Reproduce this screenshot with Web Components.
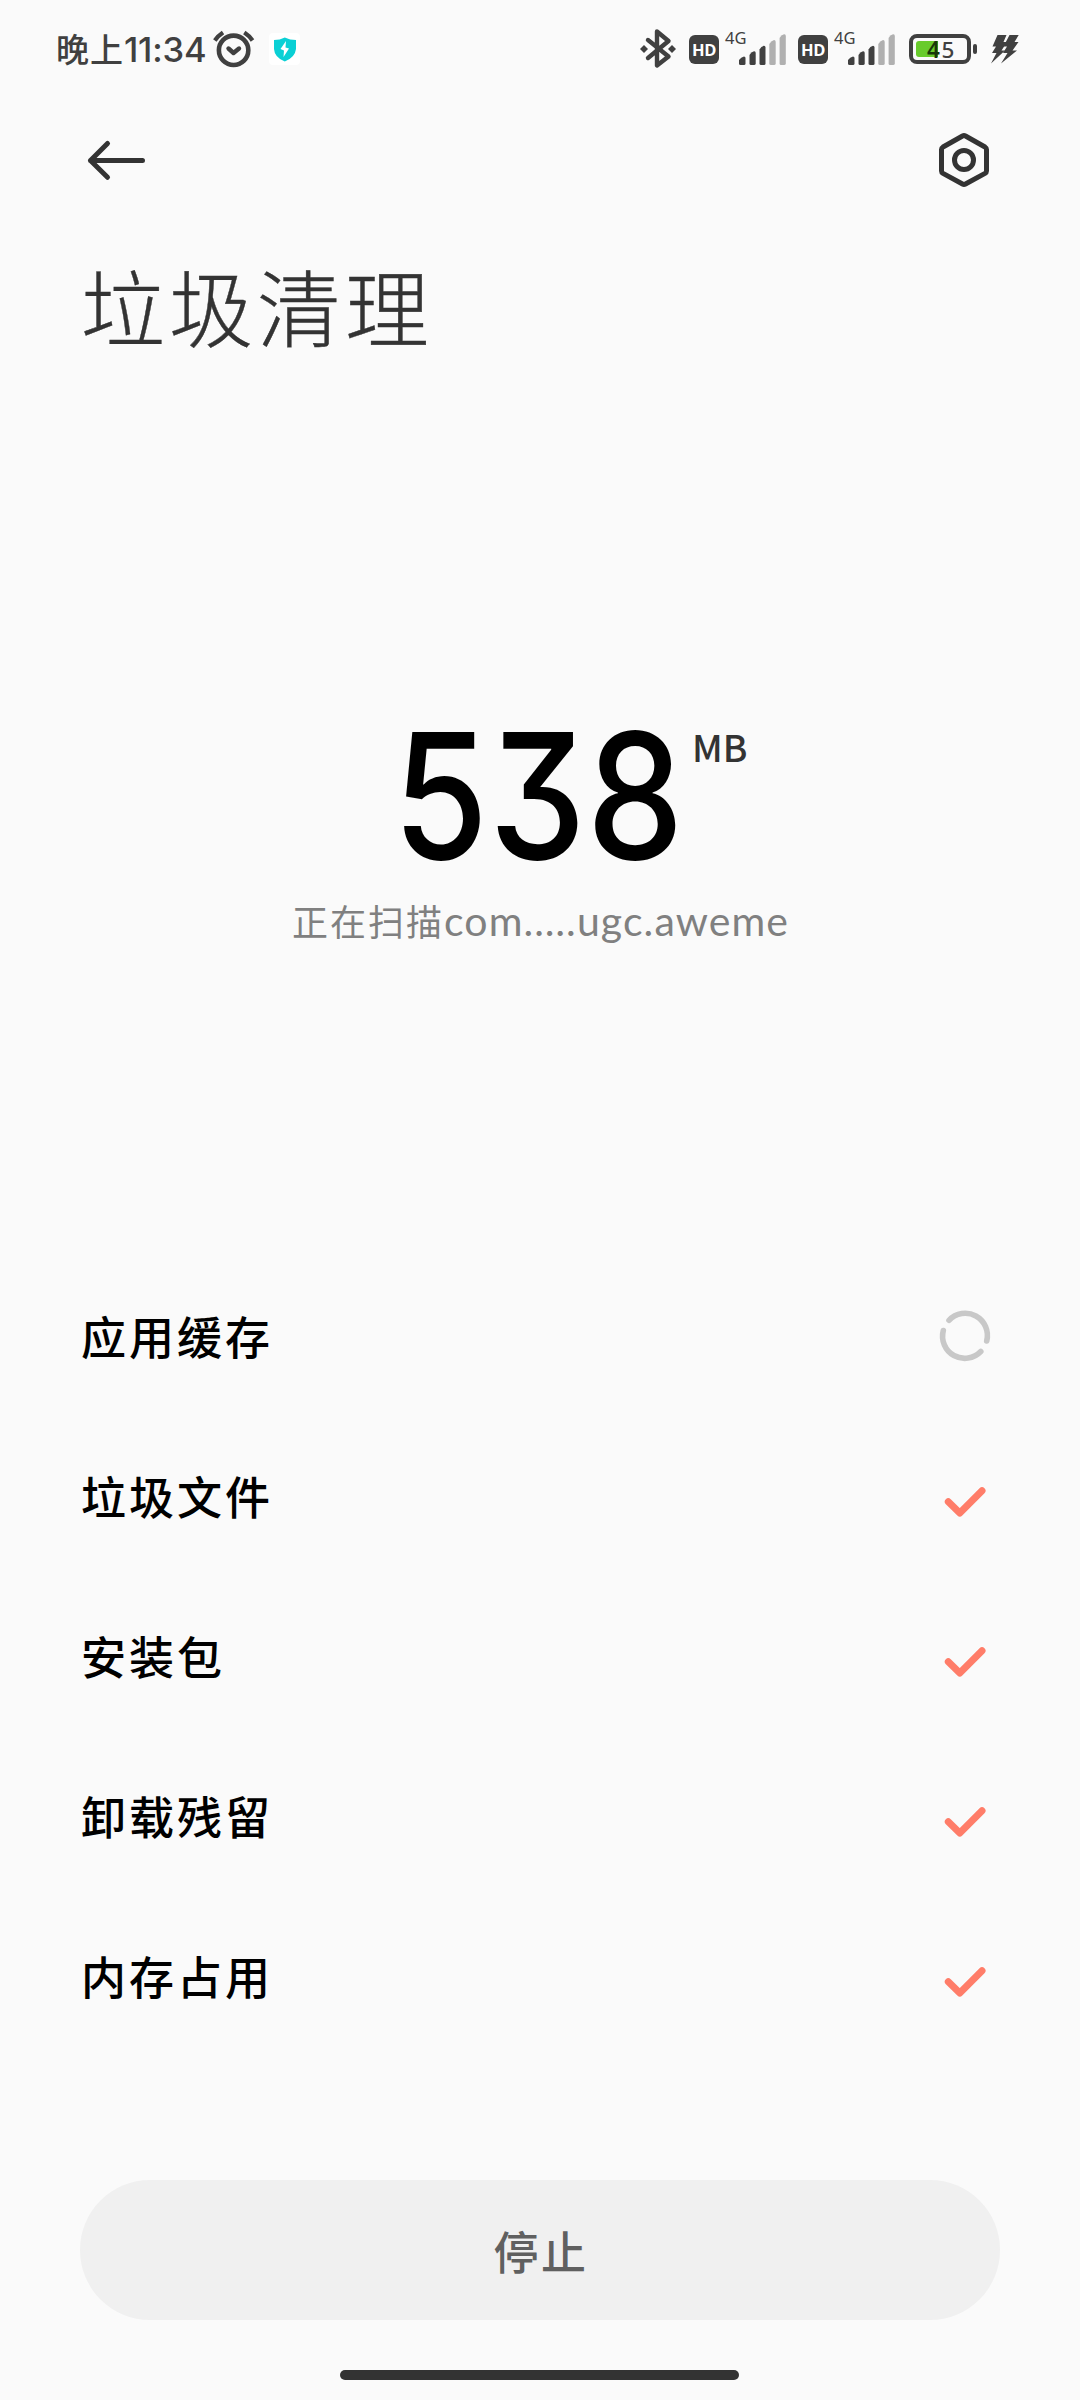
<!DOCTYPE html>
<html lang="zh-CN">
<head>
<meta charset="utf-8">
<title>垃圾清理</title>
<style>
    html, body {
        margin: 0;
        background: #fafafa;
    }
    body {
        width: 1080px;
        height: 2400px;
        overflow: hidden;
        font-family: "Noto Sans CJK SC", sans-serif;
        color: #333;
    }
</style>
</head>
<body>
<cleaner-page>
    <status-bar slot="status" battery="45">晚上<span>11:34</span></status-bar>
    <title-bar slot="title">垃圾清理</title-bar>
    <scan-total slot="total" value="538" unit="MB">正在扫描<span>com.….ugc.aweme</span></scan-total>
    <scan-item state="loading">应用缓存</scan-item>
    <scan-item state="done">垃圾文件</scan-item>
    <scan-item state="done">安装包</scan-item>
    <scan-item state="done">卸载残留</scan-item>
    <scan-item state="done">内存占用</scan-item>
    <stop-button slot="action">停止</stop-button>
</cleaner-page>

<script>
class CleanerPage extends HTMLElement{
    constructor(){
        super();
        const shadow = this.attachShadow({mode: 'open'});
        shadow.innerHTML=`
              <style>
                :host {
                    display: flex;
                    flex-direction: column;
                    width: 1080px;
                    height: 2400px;
                }
                .list {
                    display: flex;
                    flex-direction: column;
                    height: 923px;
                    flex: none;
                }
                .gesto {
                    width: 399px;
                    height: 10px;
                    margin: 50px 0 0 340px;
                    border-radius: 5px;
                    background: #333;
                }
              </style>
              <slot name="status"></slot>
              <slot name="title"></slot>
              <slot name="total"></slot>
              <div class="list"><slot></slot></div>
              <slot name="action"></slot>
              <div class="gesto"></div>`;
    }
}

class SignalIcon extends HTMLElement{
    constructor(){
        super();
        const shadow = this.attachShadow({mode: 'open'});
        shadow.innerHTML=`
              <style>
                :host {
                    display: flex;
                    width: 98px;
                    height: 98px;
                    align-items: center;
                }
                .hd {
                    width: 30px;
                    height: 29px;
                    border-radius: 6px;
                    background: #404040;
                    color: #fff;
                    font: bold 16.500px/29px "Open Sans", sans-serif;
                    letter-spacing: -0.500px;
                    text-align: center;
                }
                .red {
                    align-self: flex-start;
                    width: 22px;
                    margin: 26px 0 0 6px;
                    font: 400 16.500px/24px "Noto Sans", sans-serif;
                }
                svg {
                    margin-left: -9px;
                }
              </style>
              <div class="hd">HD</div>
              <div class="red">4G</div>
              <svg width="49" height="98" viewBox="0 0 49 98" fill="#404040">
                <path d="M1 63.500V60Q3 57 6 56.500Q7.500 56.500 7.500 58V63.500Q7.500 65 6 65H2.500Q1 65 1 63.500Z"/>
                <path d="M11.500 63.500V55Q13 52 16 51.200Q17.700 51 17.700 53V63.500Q17.700 65 16 65H13Q11.500 65 11.500 63.500Z"/>
                <path d="M21.500 63.500V49.500Q23 46.500 26 45.800Q27.500 45.800 27.500 47.500V63.500Q27.500 65 26 65H23Q21.500 65 21.500 63.500Z"/>
                <path fill="#b0b0b0" d="M31.300 63.500V44Q33 41 36 40Q37.700 40 37.700 42V63.500Q37.700 65 36 65H33Q31.300 65 31.300 63.500Z"/>
                <path fill="#b0b0b0" d="M41.600 63.500V38Q43 35 46 34.300Q47.800 34 47.800 36V63.500Q47.800 65 46 65H43Q41.600 65 41.600 63.500Z"/>
              </svg>`;
    }
}

class BatteryIcon extends HTMLElement{
    connectedCallback(){
        const shadow = this.attachShadow({mode: 'open'});
        const level = this.getAttribute('level');
        shadow.innerHTML=`
              <style>
                :host {
                    display: flex;
                    align-items: center;
                }
                .caja {
                    box-sizing: border-box;
                    display: grid;
                    width: 62px;
                    height: 30px;
                    padding: 3px;
                    border: 4px solid #404040;
                    border-radius: 8px;
                }
                .caja > * {
                    grid-area: 1 / 1;
                }
                .carga {
                    width: ${level}%;
                    height: 16px;
                    border-radius: 3px 0 0 3px;
                    background: #68cb2c;
                }
                .num {
                    margin-left: 11px;
                    font: 500 22.500px/17px "Noto Sans", sans-serif;
                    letter-spacing: 1.500px;
                    color: #404040;
                }
                b {
                    font-weight: 600;
                    color: #17370a;
                }
                .polo {
                    width: 4px;
                    height: 10px;
                    margin-left: 2px;
                    border-radius: 2px;
                    background: #404040;
                }
              </style>
              <div class="caja">
                <div class="carga"></div>
                <div class="num"><b>${level[0]}</b>${level.slice(1)}</div>
              </div>
              <div class="polo"></div>`;
    }
}

class StatusBar extends HTMLElement{
    connectedCallback(){
        const shadow = this.attachShadow({mode: 'open'});
        shadow.innerHTML=`
              <style>
                :host {
                    display: flex;
                    flex: none;
                    height: 98px;
                    align-items: center;
                    color: #404040;
                }
                .hora {
                    width: 157px;
                    margin-left: 56px;
                    font-size: 33px;
                    line-height: 98px;
                    font-weight: 500;
                    letter-spacing: 1px;
                    white-space: nowrap;
                }
                ::slotted(span) {
                    font-family: Inter, sans-serif;
                    font-size: 34.500px;
                    letter-spacing: -0.200px;
                }
                svg {
                    flex: none;
                }
                .bt {
                    margin-left: auto;
                }
                signal-icon {
                    margin-left: 11px;
                }
                battery-icon {
                    margin-left: 13px;
                }
              </style>
              <div class="hora"><slot></slot></div>
              <svg width="88" height="98" viewBox="213 0 88 98">
                <g fill="none" stroke="#404040" stroke-linecap="round" stroke-linejoin="round">
                  <circle cx="233.600" cy="50.300" r="14.700" stroke-width="4.600"/>
                  <path stroke-width="4.400" d="M228.500 48.500L233.500 53L239 48.500"/>
                  <path stroke-width="4.200" stroke-linecap="butt" d="M214.800 40.500Q218 36 223 32.600M244.300 32.600Q249.500 36 252.500 40.500"/>
                </g>
                <rect x="269" y="33" width="31" height="32" rx="4" fill="#fff"/>
                <path fill="#0bd0d5" d="M274 40Q280 40 284.800 37.500Q290 40 296 40V49Q295 57.500 284.800 61.500Q274.500 57.500 274 49Z"/>
                <path fill="#fff" d="M286 41L280.500 49L284 50.500L283.500 57L289 48.500L285.500 47.500Z"/>
              </svg>
              <svg class="bt" width="38" height="98" viewBox="640 0 38 98">
                <path fill="none" stroke="#404040" stroke-width="4.400" stroke-linecap="round" stroke-linejoin="round" d="M648 40L668.500 56.500L657 65.500V31.500L668.500 41L648 58"/>
                <path fill="#404040" d="M640 49L644 45L648 49L644 53ZM668 49L672 45L676 49L672 53Z"/>
              </svg>
              <signal-icon></signal-icon>
              <signal-icon></signal-icon>
              <battery-icon level="${this.getAttribute('battery')}"></battery-icon>
              <svg width="103" height="98" viewBox="977 0 103 98" fill="#404040">
                <path d="M997.500 35H1006.500L1003.500 42H1007L1001.500 50.500H1005L991 63.500L996.500 53H992L996 46.500H992.500Z"/>
                <path d="M1009.500 35H1018.700L1014.500 42H1018.500L1012.500 50.500H1017L1001 63.500L1007.500 53H1003L1007 46.500H1003.500Z"/>
              </svg>`;
    }
}

class TitleBar extends HTMLElement{
    constructor(){
        super();
        const shadow = this.attachShadow({mode: 'open'});
        shadow.innerHTML=`
              <style>
                :host {
                    display: block;
                    flex: none;
                    height: 282px;
                }
                .acciones {
                    display: flex;
                    justify-content: space-between;
                    padding: 32px 80px 0 80px;
                }
                svg {
                    fill: none;
                    stroke: #333;
                    stroke-width: 5;
                    stroke-linecap: round;
                    stroke-linejoin: round;
                }
                h1 {
                    margin: 55px 0 0 81px;
                    font-size: 84px;
                    line-height: 120px;
                    font-weight: 300;
                    letter-spacing: 4px;
                    -webkit-text-stroke: 0.400px #333;
                }
              </style>
              <div class="acciones">
                <svg width="70" height="60" viewBox="80 130 70 60"><path d="M107.500 143.500L90.500 160.500L107.500 177.300M90.500 160.500H142.500"/></svg>
                <svg width="70" height="60" viewBox="930 130 70 60"><path d="M962.500 136Q964 135.200 965.500 136L985 147Q986.500 148 986.500 149.500V171Q986.500 172.500 985 173.400L965.500 184Q964 184.800 962.500 184L943 173.400Q941.500 172.500 941.500 171V149.500Q941.500 148 943 147Z"/><circle cx="964" cy="160" r="9.500"/></svg>
              </div>
              <h1><slot></slot></h1>`;
    }
}

class ScanTotal extends HTMLElement{
    connectedCallback(){
        const shadow = this.attachShadow({mode: 'open'});
        shadow.innerHTML=`
              <style>
                :host {
                    display: block;
                    flex: none;
                    height: 877px;
                }
                .total {
                    display: flex;
                    padding: 317px 0 0 393px;
                }
                .valor {
                    width: 299px;
                    height: 196px;
                    color: #000;
                    font: 500 175px/197px Inter, sans-serif;
                    font-feature-settings: "cv09";
                    letter-spacing: 1px;
                    transform: scaleX(.88);
                    transform-origin: 0 0;
                }
                .unidad {
                    margin-top: 22px;
                    font-size: 37px;
                    line-height: 54px;
                    font-weight: 500;
                }
                .ruta {
                    margin: 0 0 0 292px;
                    font-size: 36px;
                    line-height: 54px;
                    letter-spacing: 2px;
                    color: #808080;
                    white-space: nowrap;
                }
                ::slotted(span) {
                    font-family: Lato, sans-serif;
                    font-size: 41px;
                    letter-spacing: 1.100px;
                }
              </style>
              <div class="total">
                <div class="valor">${this.getAttribute('value')}</div>
                <div class="unidad">${this.getAttribute('unit')}</div>
              </div>
              <div class="ruta"><slot></slot></div>`;
    }
}

class ScanItem extends HTMLElement{
    connectedCallback(){
        const shadow = this.attachShadow({mode: 'open'});
        // icons are centred on 0,0
        const iconos = {
            loading: '<path stroke="#c8c8c8" stroke-width="5.600" d="M-16 -16.700A22.200 22.200 0 0 1 21.700 4M15.800 14.500A22.200 22.200 0 0 1 -21.700 -6.500"/>',
            done: '<path stroke="#ff7d69" stroke-width="7" d="M-16.700 4.700L-5.200 16L17 -6.200"/>'
        };
        shadow.innerHTML=`
              <style>
                :host {
                    display: flex;
                    flex: none;
                    height: 160px;
                    padding: 0 85px 0 81px;
                    align-items: center;
                    justify-content: space-between;
                    color: #000;
                }
                .texto {
                    margin-bottom: 3px;
                    font-size: 45px;
                    line-height: 66px;
                    font-weight: 500;
                    letter-spacing: 3px;
                }
                svg {
                    fill: none;
                    stroke-linecap: round;
                    stroke-linejoin: round;
                }
              </style>
              <div class="texto"><slot></slot></div>
              <svg width="60" height="60" viewBox="-30 -30 60 60">${iconos[this.getAttribute('state')]}</svg>`;
    }
}

class StopButton extends HTMLElement{
    constructor(){
        super();
        const shadow = this.attachShadow({mode: 'open'});
        shadow.innerHTML=`
              <style>
                :host {
                    display: block;
                    flex: none;
                    padding: 0 80px;
                }
                button {
                    display: block;
                    width: 100%;
                    height: 140px;
                    padding: 0 0 0 2px;
                    border: 0;
                    border-radius: 70px;
                    background: #f0f0f0;
                    color: #606060;
                    font: 500 45px/139px "Noto Sans CJK SC", sans-serif;
                    letter-spacing: 2.500px;
                }
              </style>
              <button><slot></slot></button>`;
    }
}

window.customElements.define('cleaner-page', CleanerPage);
window.customElements.define('signal-icon', SignalIcon);
window.customElements.define('battery-icon', BatteryIcon);
window.customElements.define('status-bar', StatusBar);
window.customElements.define('title-bar', TitleBar);
window.customElements.define('scan-total', ScanTotal);
window.customElements.define('scan-item', ScanItem);
window.customElements.define('stop-button', StopButton);
</script>
</body>
</html>
